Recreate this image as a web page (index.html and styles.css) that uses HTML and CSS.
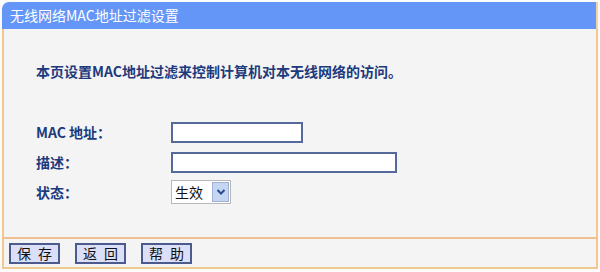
FILE: index.html
```html
<!DOCTYPE html>
<html lang="zh-CN">
<head>
    <meta charset="UTF-8">
    <title>无线网络MAC地址过滤设置</title>
    <link rel="stylesheet" href="styles.css">
</head>
<body>
    <div class="panel">
        <div class="panel-title">无线网络MAC地址过滤设置</div>
        <div class="panel-body">
            <p class="intro">本页设置MAC地址过滤来控制计算机对本无线网络的访问。</p>
            <div class="form-row">
                <label class="label" for="mac">MAC 地址：</label>
                <input class="text-input short" type="text" id="mac">
            </div>
            <div class="form-row">
                <label class="label" for="desc">描述：</label>
                <input class="text-input long" type="text" id="desc">
            </div>
            <div class="form-row">
                <span class="label">状态：</span>
                <div class="select-box">
                    <span class="select-value">生效</span>
                    <span class="select-arrow">
                        <svg width="10" height="8" viewBox="0 0 10 8">
                            <path d="M1.5 2 L5 5.5 L8.5 2" fill="none" stroke="#2a4a8a" stroke-width="2"/>
                        </svg>
                    </span>
                </div>
            </div>
        </div>
        <div class="panel-foot">
            <button class="btn">保 存</button>
            <button class="btn">返 回</button>
            <button class="btn">帮 助</button>
        </div>
    </div>
</body>
</html>
```

FILE: styles.css
```css
/* 全局 */
body {
    margin: 0;
    padding: 2px;
    background: #fbfbfb;
    font-family: "Noto Sans CJK SC", "Liberation Sans", sans-serif;
    font-size: 14px;
    color: #1c3a7c;
}
.panel {
    width: 596px;
    height: 267px;
    display: flex;
    flex-direction: column;
    box-sizing: border-box;
}
.panel-title {
    height: 27px;
    background: #6396f7;
    color: #fff;
    font-size: 14px;
    line-height: 27px;
    padding-left: 8px;
    border-top-left-radius: 7px;
    border-right: 2px solid #f2d3a8;
}
.panel-body {
    flex: 1;
    background: #f4f4f4;
    border-left: 2px solid #f0c890;
    border-right: 2px solid #f0c890;
    border-bottom: 2px solid #efbf8f;
    padding: 34px 0 0 32px;
}
.intro {
    margin: 0 0 38px 0;
    line-height: 16px;
    font-weight: bold;
}
.form-row {
    display: flex;
    align-items: center;
    height: 30px;
}
.label {
    width: 135px;
    font-weight: bold;
}
.text-input {
    height: 21px;
    box-sizing: border-box;
    border: 2px solid #56699c;
    background: #fff;
    outline: none;
    padding: 0 3px;
}
.short {
    width: 132px;
}
.long {
    width: 226px;
}
.select-box {
    display: flex;
    align-items: center;
    width: 60px;
    height: 24px;
    box-sizing: border-box;
    border: 1px solid #b8b8b8;
    background: #fff;
}
.select-value {
    flex: 1;
    padding-left: 3px;
    color: #111;
    font-size: 14px;
}
.select-arrow {
    width: 17px;
    height: 20px;
    margin-right: 1px;
    box-sizing: border-box;
    border: 1px solid #9fb2d4;
    background: #c4d6f2;
    display: flex;
    align-items: center;
    justify-content: center;
}
.panel-foot {
    height: 28px;
    background: #f4f4f4;
    border-left: 2px solid #f0c890;
    border-right: 2px solid #f0c890;
    border-bottom: 2px solid #f0c890;
    display: flex;
    align-items: center;
    gap: 15px;
    padding-left: 5px;
}
.btn {
    width: 51px;
    height: 21px;
    padding: 0;
    border: 2px solid #4b5b8e;
    background: #dcdff8;
    color: #111;
    font-family: "Noto Sans CJK SC", "Liberation Sans", sans-serif;
    font-size: 14px;
    line-height: 17px;
    letter-spacing: 2px;
    text-indent: 2px;
}
```
